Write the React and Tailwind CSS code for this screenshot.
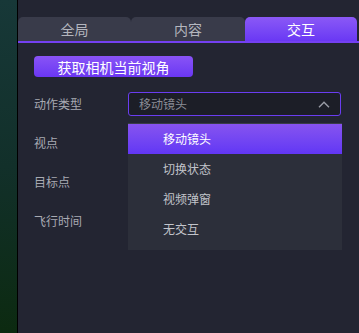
import React, { useState } from "react";

const tabs = ["全局", "内容", "交互"];
const actions = ["移动镜头", "切换状态", "视频弹窗", "无交互"];
const fields = ["视点", "目标点", "飞行时间"];

function ChevronUp() {
  return (
    <svg width="12" height="7" viewBox="0 0 12 7" fill="none">
      <path d="M1 6.2 L6 1.2 L11 6.2" stroke="#9a9ca6" strokeWidth="1.4" />
    </svg>
  );
}

export default function App() {
  const [tab, setTab] = useState(2);
  const [action, setAction] = useState(0);
  const [open, setOpen] = useState(true);

  return (
    <div
      className="w-[359px] h-[333px] flex overflow-hidden bg-[#232532]"
      style={{ fontFamily: '"Noto Sans CJK SC", "Noto Sans", sans-serif' }}
    >
      <div className="w-[17px] bg-gradient-to-b from-[#173838] via-[#12302a] to-[#0c2a10]" />
      <div className="w-[1px] bg-black" />

      <div className="flex-1 flex flex-col pt-[17px]">
        {/* tabs */}
        <div className="flex pr-[2px] h-[24px]">
          {tabs.map((t, i) => (
            <button
              key={t}
              onClick={() => setTab(i)}
              className={
                "flex items-center justify-center text-[14px] leading-none rounded-t-[5px] " +
                (i === 0 ? "w-[113px] " : i === 1 ? "w-[114px] " : "flex-1 ") +
                (tab === i
                  ? "bg-gradient-to-b from-[#8b58f6] to-[#6a37f4] text-white"
                  : "bg-[#393b4a] text-[#b4b6be]")
              }
            >
              {t}
            </button>
          ))}
        </div>
        <div className="h-[2px] bg-[#7440f2]" />

        <div className="pl-[16px] pr-[18px] pt-[13px] flex flex-col">
          <button className="w-[159px] h-[21px] rounded-[4px] bg-gradient-to-b from-[#8953f6] to-[#6b36f3] text-white text-[14px] leading-none flex items-center justify-center">
            获取相机当前视角
          </button>

          <div className="mt-[15px] flex flex-col gap-[15px]">
            <div className="flex items-center h-[24px]">
              <span className="w-[94px] text-[12px] text-[#a8aab2]">动作类型</span>
              <div className="relative flex-1">
                <button
                  onClick={() => setOpen(!open)}
                  className="w-full h-[24px] rounded-[3px] border border-[#6a3df0] bg-[#1c1e27] flex items-center justify-between pl-[10px] pr-[10px] text-[12px] text-[#8a8c95]"
                >
                  <span>{actions[action]}</span>
                  <ChevronUp />
                </button>
                {open && (
                  <div className="absolute left-0 right-[-1px] top-[31px] bg-[#2c2f3a] border-t border-[#3a3d48] pb-[6px] z-10">
                    {actions.map((a, i) => (
                      <div
                        key={a}
                        onClick={() => {
                          setAction(i);
                          setOpen(false);
                        }}
                        className={
                          "h-[30px] flex items-center pl-[35px] text-[12px] cursor-pointer " +
                          (action === i
                            ? "bg-gradient-to-b from-[#8753ef] to-[#6236f5] text-white"
                            : "text-[#c2c4ca]")
                        }
                      >
                        {a}
                      </div>
                    ))}
                  </div>
                )}
              </div>
            </div>

            {fields.map((f) => (
              <div key={f} className="flex items-center h-[24px]">
                <span className="w-[94px] text-[12px] text-[#a8aab2]">{f}</span>
              </div>
            ))}
          </div>
        </div>
      </div>
    </div>
  );
}
